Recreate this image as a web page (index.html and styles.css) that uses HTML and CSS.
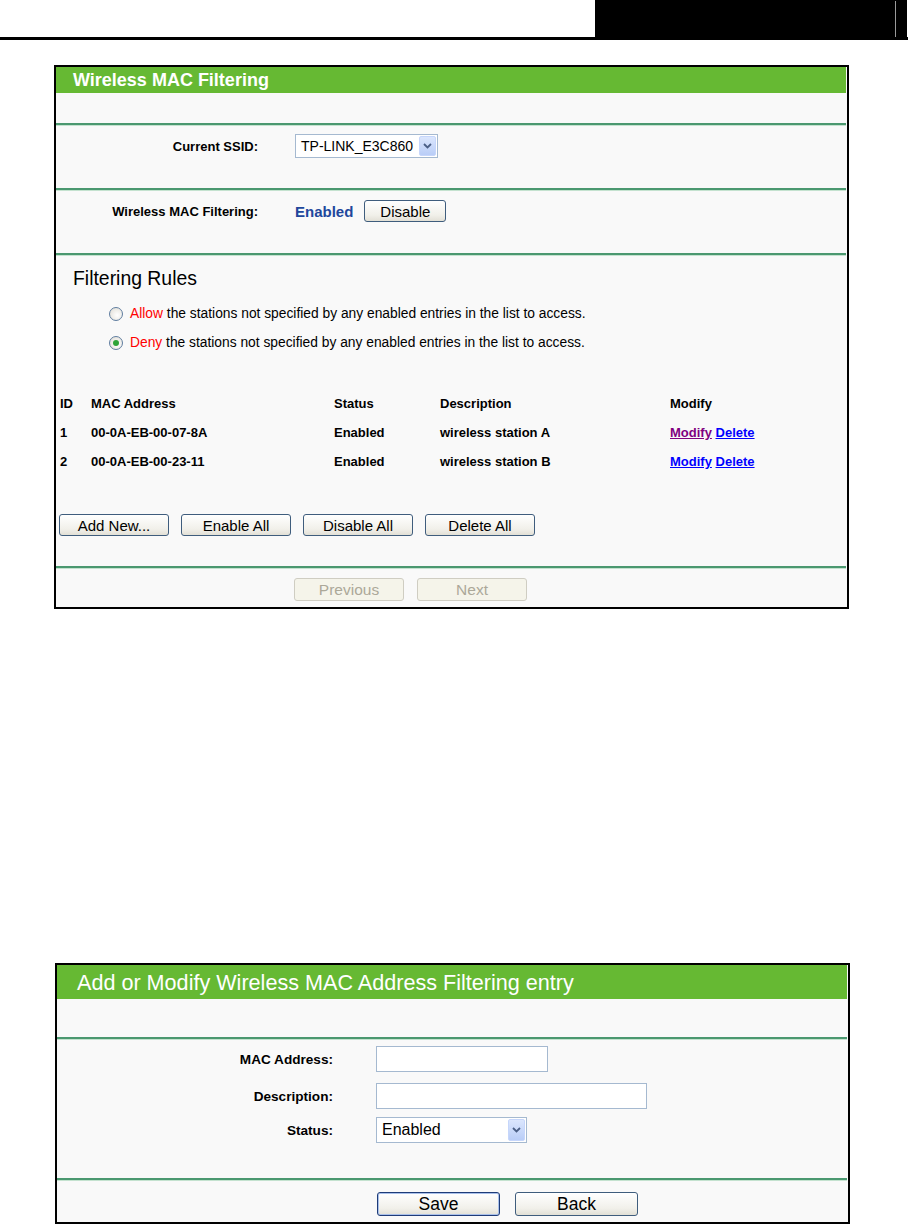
FILE: index.html
```html
<!DOCTYPE html>
<html lang="en">
  <head>
    <meta charset="UTF-8" />
    <title>Wireless MAC Filtering</title>
    <link rel="stylesheet" href="styles.css">
  </head>
  <body>
    <div class="doc-head">
      <div class="doc-tab"><span class="doc-tab-edge"></span></div>
    </div>

    <div class="panel panel-main">
      <div class="panel-title">Wireless MAC Filtering</div>
      <div class="band"></div>
      <div class="sep"></div>

      <div class="field-row row-ssid">
        <div class="label">Current SSID:</div>
        <div class="select select-ssid">
          <span class="select-text">TP-LINK_E3C860</span>
          <span class="select-arrow">
            <svg width="9" height="6" viewBox="0 0 9 6"><path d="M1 1 L4.5 4.5 L8 1" fill="none" stroke="#4b5f86" stroke-width="1.8"/></svg>
          </span>
        </div>
      </div>
      <div class="sep"></div>

      <div class="field-row row-filter">
        <div class="label">Wireless MAC Filtering:</div>
        <div class="value">
          <span class="status-on">Enabled</span>
          <button class="btn btn-disable">Disable</button>
        </div>
      </div>
      <div class="sep"></div>

      <div class="rules">
        <div class="rules-title">Filtering Rules</div>
        <div class="rule rule-first">
          <span class="radio"></span>
          <span><span class="rule-word">Allow</span> the stations not specified by any enabled entries in the list to access.</span>
        </div>
        <div class="rule">
          <span class="radio checked"></span>
          <span><span class="rule-word">Deny</span> the stations not specified by any enabled entries in the list to access.</span>
        </div>
      </div>

      <div class="mac-table">
        <div class="mac-row">
          <span>ID</span><span>MAC Address</span><span>Status</span><span>Description</span><span>Modify</span>
        </div>
        <div class="mac-row">
          <span>1</span><span>00-0A-EB-00-07-8A</span><span>Enabled</span><span>wireless station A</span>
          <span><a href="#" class="visited">Modify</a> <a href="#">Delete</a></span>
        </div>
        <div class="mac-row">
          <span>2</span><span>00-0A-EB-00-23-11</span><span>Enabled</span><span>wireless station B</span>
          <span><a href="#">Modify</a> <a href="#">Delete</a></span>
        </div>
      </div>

      <div class="actions">
        <button class="btn btn-wide">Add New...</button>
        <button class="btn btn-wide">Enable All</button>
        <button class="btn btn-wide">Disable All</button>
        <button class="btn btn-wide">Delete All</button>
      </div>

      <div class="sep sep-bottom"></div>
      <div class="pager">
        <button class="btn btn-pager" disabled>Previous</button>
        <button class="btn btn-pager" disabled>Next</button>
      </div>
    </div>

    <div class="panel panel-entry">
      <div class="panel-title">Add or Modify Wireless MAC Address Filtering entry</div>
      <div class="band band-entry"></div>
      <div class="sep"></div>

      <div class="entry-form">
        <div class="entry-row">
          <div class="label">MAC Address:</div>
          <div class="text-input input-mac"></div>
        </div>
        <div class="entry-row">
          <div class="label">Description:</div>
          <div class="text-input input-desc"></div>
        </div>
        <div class="entry-row">
          <div class="label">Status:</div>
          <div class="select select-status">
            <span class="select-text">Enabled</span>
            <span class="select-arrow">
              <svg width="9" height="6" viewBox="0 0 9 6"><path d="M1 1 L4.5 4.5 L8 1" fill="none" stroke="#4b5f86" stroke-width="1.8"/></svg>
            </span>
          </div>
        </div>
      </div>

      <div class="sep"></div>
      <div class="entry-actions">
        <button class="btn btn-save">Save</button>
        <button class="btn btn-back">Back</button>
      </div>
    </div>
  </body>
</html>
```

FILE: styles.css
```css
body {
  margin: 0;
  font-family: 'Liberation Sans', Arial, sans-serif;
  color: #000;
  background: #fff;
}

/* document header strip */
.doc-head {
  height: 37px;
  border-bottom: 3px solid #000;
  display: flex;
  justify-content: flex-end;
}
.doc-tab {
  width: 312px;
  margin-right: 1px;
  background: #000;
  display: flex;
  justify-content: flex-end;
}
.doc-tab-edge {
  width: 1px;
  margin: 1px 11px 0 0;
  background: #9a9a9a;
}

/* panels */
.panel {
  width: 791px;
  border: 2px solid #000;
  background: #f9f9f9;
}
.panel-main {
  margin: 25px 0 0 54px;
}
.panel-entry {
  margin: 354px 0 0 55px;
}
.panel-title {
  background: #66b933;
  color: #fff;
  font-weight: bold;
  font-size: 18px;
  height: 26px;
  line-height: 26px;
  padding-left: 17px;
  margin-right: 1px;
}
.panel-entry .panel-title {
  font-weight: normal;
  font-size: 21.6px;
  height: 34px;
  line-height: 36px;
  padding-left: 20px;
}
.band {
  height: 30px;
}
.band-entry {
  height: 38px;
}
.sep {
  height: 2px;
  background: #4b9870;
  border-bottom: 1px solid #c4e2cf;
  margin-right: 1px;
}

/* label / value rows */
.field-row {
  display: grid;
  grid-template-columns: 202px auto;
  column-gap: 37px;
  align-items: center;
}
.row-ssid {
  padding: 8px 0 30px;
}
.row-filter {
  padding: 9px 0 31px;
}
.label {
  text-align: right;
  font-weight: bold;
  font-size: 13px;
}
.panel-entry .label {
  font-size: 13.6px;
}
.value {
  display: flex;
  align-items: center;
}
.status-on {
  color: #21479c;
  font-weight: bold;
  font-size: 15px;
  margin-right: 11px;
}

/* selects and inputs */
.select {
  display: flex;
  align-items: center;
  justify-content: space-between;
  box-sizing: border-box;
  border: 1px solid #a5b9d0;
  background: #fff;
  padding: 1px;
}
.select-ssid {
  width: 143px;
  height: 24px;
  font-size: 14px;
}
.select-status {
  width: 151px;
  height: 26px;
  font-size: 16px;
}
.select-text {
  padding-left: 4px;
}
.select-arrow {
  width: 17px;
  align-self: stretch;
  display: flex;
  align-items: center;
  justify-content: center;
  background: linear-gradient(#dbe6fd, #b9cdf7);
  border: 1px solid #c6d6fb;
  border-radius: 2px;
  box-sizing: border-box;
}
.text-input {
  box-sizing: border-box;
  height: 26px;
  border: 1px solid #a5b9d0;
  background: #fff;
}
.input-mac {
  width: 172px;
}
.input-desc {
  width: 271px;
}

/* buttons */
.btn {
  font-family: inherit;
  font-size: 15px;
  color: #000;
  height: 22px;
  padding: 0;
  border: 1px solid #3f5d7d;
  border-radius: 3px;
  background: linear-gradient(#ffffff, #f1f0ea 70%, #e2e0d6);
}
.btn-disable {
  width: 82px;
}
.btn-wide {
  width: 110px;
}
.btn-pager {
  width: 110px;
  height: 23px;
  font-size: 15.5px;
  color: #aca899;
  border-color: #cfcdc2;
  background: #f5f4ea;
}

/* filtering rules */
.rules {
  padding: 11px 0 0 17px;
}
.rules-title {
  font-size: 19.4px;
  line-height: 22px;
}
.rule {
  display: flex;
  align-items: center;
  height: 29px;
  padding-left: 36px;
  font-size: 13.8px;
}
.rule-first {
  margin-top: 10px;
}
.rule-word {
  color: #f00;
}
.radio {
  width: 14px;
  height: 14px;
  flex: none;
  box-sizing: border-box;
  border-radius: 50%;
  border: 1px solid #5f7d9f;
  background: radial-gradient(circle at 60% 60%, #ffffff, #dedbd2);
  margin-right: 7px;
  position: relative;
}
.radio.checked::after {
  content: '';
  position: absolute;
  inset: 3px;
  border-radius: 50%;
  background: #2ea438;
}

/* entries table */
.mac-table {
  margin-top: 32px;
  padding-left: 4px;
}
.mac-row {
  display: grid;
  grid-template-columns: 31px 243px 106px 230px 1fr;
  height: 29px;
  align-items: center;
  font-weight: bold;
  font-size: 13px;
}
.mac-row a {
  color: #0000ff;
}
.mac-row a.visited {
  color: #800080;
}

.actions {
  display: flex;
  gap: 12px;
  margin-top: 38px;
  padding-left: 3px;
}
.sep-bottom {
  margin-top: 30px;
}
.pager {
  display: flex;
  gap: 13px;
  padding: 9px 0 6px 238px;
}

/* entry form */
.entry-form {
  padding: 6px 0 35px;
}
.entry-row {
  display: grid;
  grid-template-columns: 276px auto;
  column-gap: 43px;
  align-items: center;
}
.entry-row:nth-child(1) {
  margin-bottom: 11px;
}
.entry-row:nth-child(2) {
  margin-bottom: 8px;
}
.entry-actions {
  display: flex;
  gap: 15px;
  padding: 11px 0 6px 320px;
}
.btn-save,
.btn-back {
  width: 123px;
  height: 24px;
  font-size: 17.5px;
}
.btn-save {
  border-color: #1f3c78;
  box-shadow: inset 0 0 0 1px #a9c0ea;
}
```
